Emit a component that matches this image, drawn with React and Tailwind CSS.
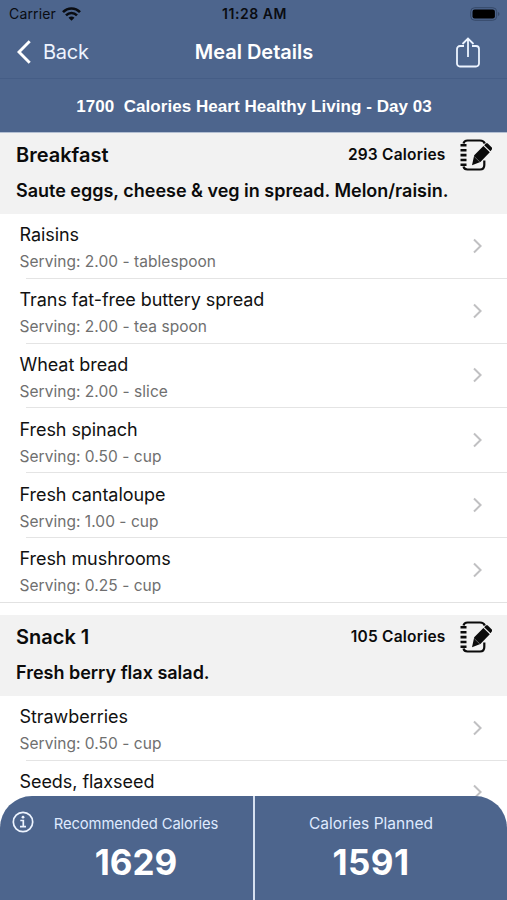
import React from "react";

const breakfast = [
  ["Raisins", "Serving: 2.00 - tablespoon"],
  ["Trans fat-free buttery spread", "Serving: 2.00 - tea spoon"],
  ["Wheat bread", "Serving: 2.00 - slice"],
  ["Fresh spinach", "Serving: 0.50 - cup"],
  ["Fresh cantaloupe", "Serving: 1.00 - cup"],
  ["Fresh mushrooms", "Serving: 0.25 - cup"],
];

const snack = [
  ["Strawberries", "Serving: 0.50 - cup"],
  ["Seeds, flaxseed", ""],
];

function EditIcon() {
  return (
    <svg className="h-8 w-8" viewBox="0 0 32 32" fill="none">
      <path d="M3.500 4.500C4 2.200 5.200 1.500 7.500 1.500h12.500c2.500 0 4 .9 4.800 3M3.500 27.500c.5 2.200 1.700 3 4 3h12.500c3 0 4.300-1.500 4.300-4.500v-4.500" stroke="#0b0b0b" strokeWidth="2.200" />
      <path d="M0.500 6.300h6M0.500 11.200h6M0.500 16.100h6M0.500 21h6M0.500 25.700h6" stroke="#0b0b0b" strokeWidth="2.600" />
      <path d="M12 26.200l2.200-9.900 9.200-9.300 6.400 6.200-9.400 9.900zM24.200 6.200l1.600-1.600c.6-.6 1.400-.6 2 0l4 3.900c.6.600.6 1.300 0 1.900l-1.300 1.800z" fill="#0b0b0b" />
      <path d="M14.400 17.700l5.300 5.100" stroke="#f2f2f2" strokeWidth=".4" />
    </svg>
  );
}

function Row({ title, serving, last }) {
  return (
    <div className="flex h-[64.8px] flex-col">
      <div className="flex flex-1 items-center justify-between pr-[25px] pl-[19.500px]">
        <div className="pt-[4px]">
          <div className="h-[27px] text-[18px] leading-[27px] tracking-[-0.060px] text-[#111]">{title}</div>
          <div className="h-[26px] text-[15.500px] leading-[27px] tracking-[0.040px] text-[#6f6f6f]">{serving}</div>
        </div>
        <svg className="h-4 w-[9px]" viewBox="0 0 9 16" fill="none" stroke="#c0c0c2" strokeWidth="2">
          <path d="M1 1.500 7.600 8 1 14.500" />
        </svg>
      </div>
      <div className={last ? "h-px bg-[#e2e2e2]" : "ml-[26px] h-px bg-[#e4e4e4]"} />
    </div>
  );
}

function Section({ name, calories, summary, items }) {
  return (
    <section>
      <div className="h-[81px] bg-[#f2f2f2] pl-4 text-[#0b0b0b]">
        <div className="flex h-[44px] items-center justify-between pr-[15px]">
          <h2 className="text-[20px] font-semibold">{name}</h2>
          <div className="flex items-center gap-[14.500px]">
            <span className="text-[15.500px] font-semibold tracking-[0.200px]">{calories} Calories</span>
            <EditIcon />
          </div>
        </div>
        <p className="text-[18px] leading-[28px] font-semibold tracking-[-0.010px] whitespace-nowrap">{summary}</p>
      </div>
      {items.map(([title, serving], i) => (
        <Row key={title} title={title} serving={serving} last={i === items.length - 1} />
      ))}
    </section>
  );
}

export default function App() {
  return (
    <div className="relative h-[900px] w-[507px] overflow-hidden bg-white font-['Inter',sans-serif]">
      <header className="bg-[#4d658d]">
        <div className="grid h-[27px] grid-cols-3 items-center pr-[7px] pl-[9px] text-[#0a0c11]">
          <div className="flex items-center gap-[6px] text-[14px] tracking-[0.150px]">
            Carrier
            <svg className="h-[14px] w-[19px]" viewBox="0 0 19 14" fill="none" stroke="#0a0c11" strokeWidth="2.600">
              <path d="M1 5.200c4.800-5 12.200-5 17 0M4 8.400c3.200-3.200 7.800-3.200 11 0" />
              <path d="M6.500 10.800c1.800-1.600 4.200-1.600 6 0l-3 3z" fill="#0a0c11" stroke="none" />
            </svg>
          </div>
          <div className="text-center text-[14px] font-semibold tracking-[0.560px]">11:28 AM</div>
          <svg className="h-[14px] w-[30px] justify-self-end" viewBox="0 0 30 14">
            <rect x=".7" y=".7" width="26" height="12.600" rx="4" fill="none" stroke="#364969" />
            <rect x="2.500" y="2.500" width="22.400" height="9" rx="2.200" fill="#000" />
            <path d="M28 5c2 .7 2 3.300 0 4z" fill="#364969" />
          </svg>
        </div>
        <div className="grid h-[52px] grid-cols-[1fr_auto_1fr] items-center border-b border-[#455d86] pr-[26px] pb-px pl-[27px] text-white">
          <div className="-ml-[10px] flex items-center gap-[12px] text-[20px] tracking-[-0.250px] text-[#edf4ff]">
            <svg className="h-6 w-[14px]" viewBox="0 0 14 24" fill="none" stroke="#fff" strokeWidth="2.900">
              <path d="M12.700 1.200 2 12l10.700 10.800" />
            </svg>
            Back
          </div>
          <h1 className="text-center text-[20px] font-semibold whitespace-nowrap">Meal Details</h1>
          <svg className="h-[31px] w-[26px] justify-self-end" viewBox="0 0 26 31" fill="none" stroke="#edf4ff" strokeWidth="1.800">
            <path d="M9 9H5a3 3 0 0 0-3 3v14.500a3 3 0 0 0 3 3h16a3 3 0 0 0 3-3V12a3 3 0 0 0-3-3h-4M13 20V1.500M7.500 7 13 1.500 18.500 7" />
          </svg>
        </div>
        <div className="flex h-[54px] items-center justify-center border-b border-[#b4c0d3] pt-[2px] pl-px font-['Liberation_Sans',sans-serif] text-[17px] font-bold tracking-[0.050px] whitespace-pre text-white">
          1700  Calories Heart Healthy Living - Day 03
        </div>
      </header>
      <main className="flex flex-col gap-[12px]">
        <Section name="Breakfast" calories="293" summary="Saute eggs, cheese & veg in spread. Melon/raisin." items={breakfast} />
        <Section name="Snack 1" calories="105" summary="Fresh berry flax salad." items={snack} />
      </main>
      <footer className="absolute inset-x-0 bottom-0 flex h-[104px] rounded-t-[32px] bg-[#4d658d] text-white">
        <div className="relative w-[255px] border-r-2 border-[#d6e0f0] pt-[16px] pl-[19px] text-center">
          <svg className="absolute top-[15px] left-[12px] h-[22px] w-[22px]" viewBox="0 0 22 22" fill="none" stroke="#edf4ff" strokeWidth="1.700">
            <circle cx="11" cy="11" r="9.700" />
            <path d="M8.300 9.500h3v6M8 15.700h6" />
            <circle cx="11" cy="6.200" r="1.400" fill="#edf4ff" stroke="none" />
          </svg>
          <div className="text-[14.800px] leading-6 tracking-[-0.130px] text-[#dfeaff]">Recommended Calories</div>
          <div className="mt-[6px] text-[35px] leading-[40px] font-bold">1629</div>
        </div>
        <div className="flex-1 pt-[16px] pr-[20px] text-center">
          <div className="text-[15.500px] leading-6 tracking-[0.030px] text-[#dfeaff]">Calories Planned</div>
          <div className="mt-[6px] text-[35px] leading-[40px] font-bold tracking-[0.400px]">1591</div>
        </div>
      </footer>
    </div>
  );
}
